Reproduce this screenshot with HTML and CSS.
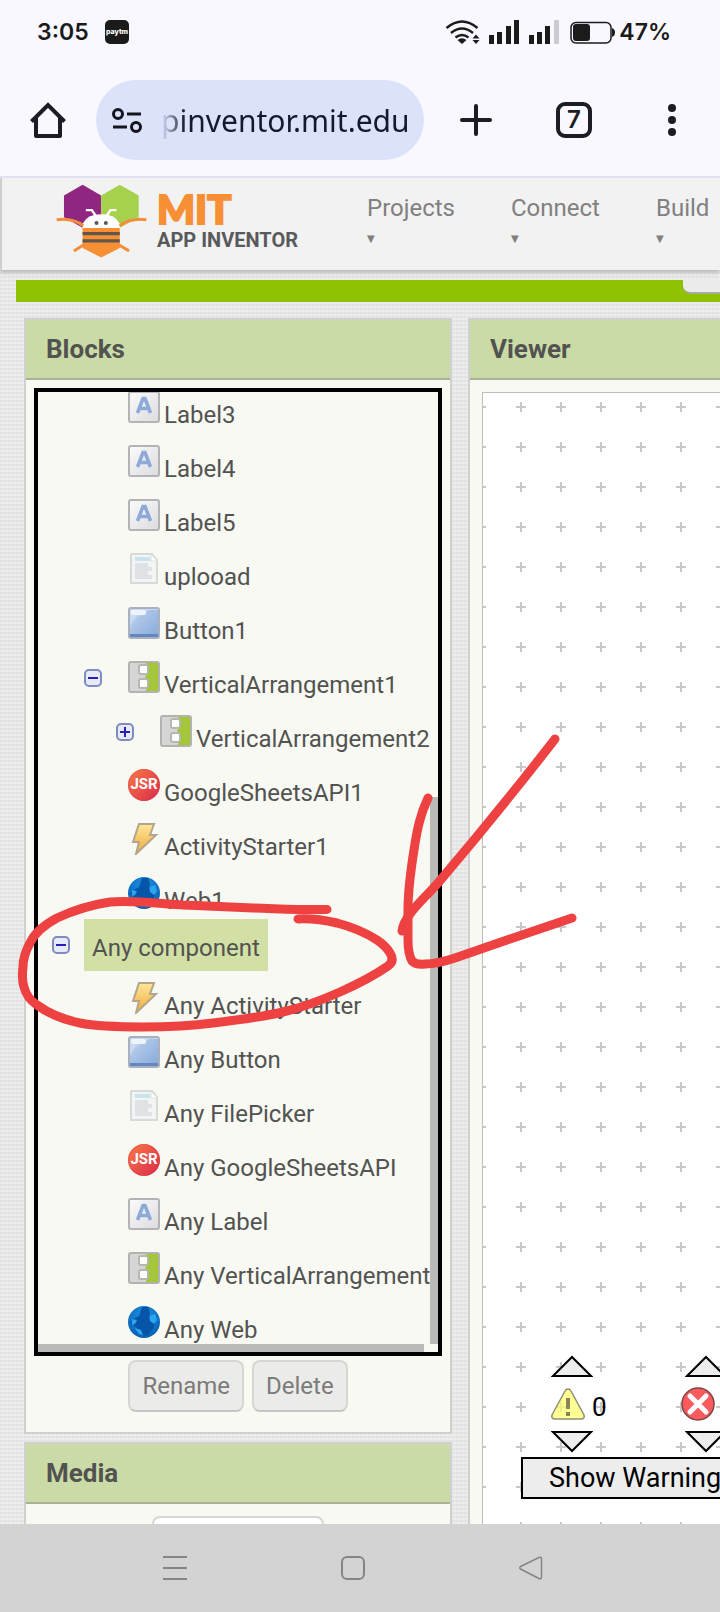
FILE: index.html
```html
<!DOCTYPE html>
<html lang="en">

<head>
    <meta charset="UTF-8">
    <meta name="viewport" content="width=device-width, initial-scale=1">
    <title>MIT App Inventor</title>
    <link rel="stylesheet" href="styles.css">
</head>

<body>
    <!-- shared icons -->
    <svg class="defs" aria-hidden="true">
        <defs>
            <linearGradient id="grey-fade" x1="0" y1="0" x2="1" y2="1">
                <stop offset="0" stop-color="#fbfbfb" />
                <stop offset="1" stop-color="#dcdce0" />
            </linearGradient>
            <linearGradient id="blue-fade" x1="0" y1="0" x2="1" y2="1">
                <stop offset="0" stop-color="#c3d6f0" />
                <stop offset="1" stop-color="#84a8da" />
            </linearGradient>
            <linearGradient id="bolt-fade" x1="0" y1="0" x2="0" y2="1">
                <stop offset="0" stop-color="#ffe79a" />
                <stop offset="1" stop-color="#f0a93a" />
            </linearGradient>
            <radialGradient id="web-fade" cx="0.5" cy="0.3" r="0.7">
                <stop offset="0" stop-color="#1c93e6" />
                <stop offset="1" stop-color="#0960b2" />
            </radialGradient>
            <pattern id="grid" x="33" y="9" width="40" height="40" patternUnits="userSpaceOnUse">
                <path d="M0 5h10M5 0v10" stroke="#c8c8c8" stroke-width="2" />
            </pattern>
        </defs>
        <symbol id="i-label" viewBox="0 0 32 32">
            <rect x="1" y="1" width="30" height="30" rx="2" fill="url(#grey-fade)" stroke="#b4b4b6" stroke-width="2" />
            <path d="M9.500 22 15 7.500h2L22.500 22M12 17.500h8" fill="none" stroke="#8eabd8" stroke-width="3.600" />
        </symbol>
        <symbol id="i-file" viewBox="0 0 32 32">
            <path d="M4 1h20l5 6v23H3V2z" fill="#f2f5f4" stroke="#d6dbd9" stroke-width="2" />
            <path d="M23 2v6h6" fill="#fff" stroke="#dce0df" />
            <path d="M7 6h15" stroke="#c9e4ea" stroke-width="4" />
            <path d="M7 12h13M7 16h17M7 20h13M7 24h17" stroke="#e0e3e5" stroke-width="4" />
        </symbol>
        <symbol id="i-button" viewBox="0 0 32 32">
            <rect x="1" y="1" width="30" height="30" rx="2" fill="url(#blue-fade)" stroke="#a9b1bf" stroke-width="2" />
            <path d="M2 27h28v3H2z" fill="#6388bf" />
            <path d="M2 20Q6 8 22 3h8v-1H2z" fill="#d5e3f6" opacity="0.600" />
            <rect x="3" y="3" width="15" height="5" rx="2" fill="#eef4fc" />
        </symbol>
        <symbol id="i-vertical" viewBox="0 0 32 32">
            <rect x="1" y="1" width="30" height="30" rx="2" fill="#d6d6d6" />
            <path d="M17 1h14v30H17l4-8-4-7 4-8z" fill="#a4c639" />
            <rect x="1" y="1" width="30" height="30" rx="2" fill="none" stroke="#b2b3ae" stroke-width="2" />
            <rect x="11" y="4" width="9" height="9" rx="2" fill="#fff" stroke="#b5b8ac" stroke-width="2" />
            <rect x="11" y="18" width="9" height="9" rx="2" fill="#fff" stroke="#b5b8ac" stroke-width="2" />
        </symbol>
        <symbol id="i-bolt" viewBox="0 0 32 32">
            <path d="M11 1h15l-4 11h6L8 31l3-12H5z" fill="url(#bolt-fade)" stroke="#b3a68c" stroke-width="2" />
        </symbol>
        <symbol id="i-web" viewBox="0 0 32 32">
            <circle cx="16" cy="16" r="16" fill="url(#web-fade)" />
            <path d="M14 1h6l2 6-1 6 6 4-2 6-6 7-6-2-5-7-6-4 3-4 6-3z" fill="#0755a8" />
            <path d="M22 10l5-2 2 6-3 4-4-3zM4 13l5 1-2 4-3 1zM7 22l6 2 2 5-4-1z" fill="#2aa5ee" />
        </symbol>
        <symbol id="i-minus" viewBox="0 0 18 18">
            <rect x="1" y="1" width="16" height="16" rx="4" fill="#e6eaf9" stroke="#7f8cc0" stroke-width="2" />
            <path d="M4 9h10" stroke="#2a1fb5" stroke-width="2" />
        </symbol>
        <symbol id="i-plus" viewBox="0 0 18 18">
            <rect x="1" y="1" width="16" height="16" rx="4" fill="#e6eaf9" stroke="#7f8cc0" stroke-width="2" />
            <path d="M4 9h10M9 4v10" stroke="#2a1fb5" stroke-width="2" />
        </symbol>
        <symbol id="i-up" viewBox="0 0 42 22">
            <path d="M2 21 21 2l19 19z" fill="#ededed" stroke="#000" stroke-width="2" />
        </symbol>
        <symbol id="i-down" viewBox="0 0 42 22">
            <path d="M2 1h38L21 20z" fill="#ededed" stroke="#000" stroke-width="2" />
        </symbol>
    </svg>

    <header class="status-bar">
        <span class="clock">3:05</span>
        <svg class="paytm" viewBox="0 0 24 24">
            <rect width="24" height="24" rx="5" fill="#1b1b1b" />
            <text x="12" y="14">paytm</text>
        </svg>
        <svg class="signals" viewBox="448 18 170 28">
            <g fill="none" stroke="#1b1b1b" stroke-width="2.500">
                <path d="M448.500 28Q464 15 479.500 28M453 33q11-9 22 0M457.500 37.500q6.500-5 13 0" />
                <rect x="573" y="22.500" width="40" height="20.500" rx="5" stroke-width="1.500" />
            </g>
            <g fill="#1b1b1b">
                <path d="M459.500 40q4.500-3.500 9 0L464 44z" />
                <path d="M474.500 38.500 478 34.500l3.500 4zM474.500 40l3.500 4 3.500-4z" />
                <rect x="491" y="35" width="5" height="9" />
                <rect x="499" y="32" width="5" height="12" />
                <rect x="508" y="26" width="5" height="18" />
                <rect x="516" y="20" width="5" height="24" />
                <rect x="531" y="35" width="5" height="9" />
                <rect x="539" y="32" width="5" height="12" />
                <rect x="547" y="26" width="5" height="18" />
                <rect x="575" y="24" width="17" height="17" rx="3" />
                <path d="M614 28q3 1 3 4.500t-3 4.500z" />
            </g>
            <rect x="556" y="20" width="5" height="24" fill="#cbcbd0" />
        </svg>
        <span class="battery">47%</span>
    </header>

    <div class="browser-bar">
        <button class="bar-btn" aria-label="Home">
            <svg viewBox="0 0 36 36" fill="none" stroke="#1b1c24" stroke-width="4" stroke-linejoin="round">
                <path d="M1.500 19.500 18 3l16.500 16.500" stroke-linejoin="miter" />
                <path d="M6 16v18h24V16" />
            </svg>
        </button>
        <div class="url-pill">
            <svg viewBox="0 0 30 26" fill="none" stroke="#14151f" stroke-width="3">
                <circle cx="6" cy="7" r="4.500" />
                <circle cx="24" cy="20" r="4.500" />
                <path d="M15 7h14M1 20h14" />
            </svg>
            <input type="text" class="url" aria-label="Address" value="pinventor.mit.edu">
        </div>
        <div class="bar-actions">
            <button class="bar-btn" aria-label="New tab">
                <svg viewBox="0 0 36 36" stroke="#1b1c24" stroke-width="4" stroke-linecap="round">
                    <path d="M4 18h28M18 4v28" />
                </svg>
            </button>
            <button class="bar-btn tabs">7</button>
            <button class="bar-btn" aria-label="Menu">
                <svg viewBox="0 0 36 36" fill="#1b1c24">
                    <circle cx="18" cy="6" r="4" />
                    <circle cx="18" cy="18" r="4" />
                    <circle cx="18" cy="30" r="4" />
                </svg>
            </button>
        </div>
    </div>

    <main class="page">
        <div class="site-header">
            <a class="logo" href="#">
                <svg viewBox="165 38 280 228">
                    <path d="M192 75 248 43l56 32v66l-56 31-56-31z" fill="#90267f" />
                    <path d="M304 75l56-32 57 32v66l-57 31-56-31z" fill="#a6d14c" />
                    <path d="M248 175v-15q14-28 56-28t56 28v15z" fill="#fff" />
                    <path d="M248 173h112v60l-56 29-56-29z" fill="#f79035" />
                    <path d="M248 190h112M248 212h112" stroke="#635549" stroke-width="10" />
                    <g fill="none" stroke="#f28d3c" stroke-width="9">
                        <path d="M170 148q48-6 80 18M440 148q-48-6-80 18M222 242l32-20M388 242l-34-20" />
                    </g>
                    <path d="M258 119h18l12 18M350 119h-18l-12 18" fill="none" stroke="#fff" stroke-width="7" />
                    <circle cx="290" cy="158" r="6" fill="#58595b" />
                    <circle cx="318" cy="158" r="6" fill="#58595b" />
                </svg>
                <span class="logo-text">
                    <strong>MIT</strong>
                    <span>APP INVENTOR</span>
                </span>
            </a>
            <nav class="menu">
                <a href="#">Projects<small>▼</small></a>
                <a href="#">Connect<small>▼</small></a>
                <a href="#">Build<small>▼</small></a>
            </nav>
        </div>

        <div class="project-bar"><button aria-label="Screens"></button></div>

        <div class="columns">
            <div class="side">
                <section class="panel">
                    <h2>Blocks</h2>
                    <div class="panel-body">
                        <div class="tree-box">
                            <ul class="tree">
                                <li>
                                    <ul>
                                        <li><div class="row"><svg><use href="#i-label" /></svg>Label3</div></li>
                                        <li><div class="row"><svg><use href="#i-label" /></svg>Label4</div></li>
                                        <li><div class="row"><svg><use href="#i-label" /></svg>Label5</div></li>
                                        <li><div class="row"><svg><use href="#i-file" /></svg>uplooad</div></li>
                                        <li><div class="row"><svg><use href="#i-button" /></svg>Button1</div></li>
                                        <li>
                                            <div class="row open">
                                                <button class="toggle" aria-label="Collapse"><svg><use href="#i-minus" /></svg></button>
                                                <svg><use href="#i-vertical" /></svg>VerticalArrangement1
                                            </div>
                                            <ul>
                                                <li>
                                                    <div class="row open">
                                                        <button class="toggle" aria-label="Expand"><svg><use href="#i-plus" /></svg></button>
                                                        <svg><use href="#i-vertical" /></svg>VerticalArrangement2
                                                    </div>
                                                </li>
                                            </ul>
                                        </li>
                                        <li><div class="row"><span class="jsr">JSR</span>GoogleSheetsAPI1</div></li>
                                        <li><div class="row"><svg><use href="#i-bolt" /></svg>ActivityStarter1</div></li>
                                        <li><div class="row"><svg><use href="#i-web" /></svg>Web1</div></li>
                                    </ul>
                                </li>
                                <li>
                                    <div class="group">
                                        <button class="toggle" aria-label="Collapse"><svg><use href="#i-minus" /></svg></button>
                                        <span class="selected">Any component</span>
                                    </div>
                                    <ul>
                                        <li><div class="row"><svg><use href="#i-bolt" /></svg>Any ActivityStarter</div></li>
                                        <li><div class="row"><svg><use href="#i-button" /></svg>Any Button</div></li>
                                        <li><div class="row"><svg><use href="#i-file" /></svg>Any FilePicker</div></li>
                                        <li><div class="row"><span class="jsr">JSR</span>Any GoogleSheetsAPI</div></li>
                                        <li><div class="row"><svg><use href="#i-label" /></svg>Any Label</div></li>
                                        <li><div class="row"><svg><use href="#i-vertical" /></svg>Any VerticalArrangement</div></li>
                                        <li><div class="row"><svg><use href="#i-web" /></svg>Any Web</div></li>
                                    </ul>
                                </li>
                            </ul>
                            <div class="scroll-y"></div>
                            <div class="scroll-x"></div>
                        </div>
                        <div class="actions">
                            <button class="btn" disabled>Rename</button>
                            <button class="btn" disabled>Delete</button>
                        </div>
                    </div>
                </section>

                <section class="panel">
                    <h2>Media</h2>
                    <div class="panel-body media">
                        <button class="upload" aria-label="Upload File"></button>
                    </div>
                </section>
            </div>

            <section class="panel viewer">
                <h2>Viewer</h2>
                <div class="workspace">
                    <svg class="grid">
                        <rect width="100%" height="100%" fill="url(#grid)" />
                    </svg>
                    <div class="warnings">
                        <div class="indicators">
                            <div class="indicator">
                                <button aria-label="Previous warning"><svg class="arrow"><use href="#i-up" /></svg></button>
                                <div class="count">
                                    <svg viewBox="0 0 34 34">
                                        <path d="M17 2q2 0 3 2l13 24q1 4-3 4H4q-4 0-3-4L14 4q1-2 3-2z" fill="#ffff66" fill-opacity="0.700" stroke="#8f8f78" stroke-width="1.500" />
                                        <path d="M17 11v11M17 25v4" stroke="#8a8457" stroke-width="4" />
                                    </svg>
                                    <span>0</span>
                                </div>
                                <button aria-label="Next warning"><svg class="arrow"><use href="#i-down" /></svg></button>
                            </div>
                            <div class="indicator errors">
                                <button aria-label="Previous error"><svg class="arrow"><use href="#i-up" /></svg></button>
                                <div class="count">
                                    <svg viewBox="0 0 34 34">
                                        <circle cx="17" cy="17" r="16" fill="#fb5a5e" stroke="#7d4444" stroke-width="1.500" />
                                        <path d="m9 9 16 16M25 9 9 25" stroke="#fff" stroke-width="5" stroke-linecap="round" />
                                    </svg>
                                </div>
                                <button aria-label="Next error"><svg class="arrow"><use href="#i-down" /></svg></button>
                            </div>
                        </div>
                        <button class="show-warnings">Show Warning</button>
                    </div>
                </div>
            </section>
        </div>
    </main>

    <!-- hand-drawn marker -->
    <svg class="marker" viewBox="0 0 720 1612" aria-hidden="true">
        <path d="M327 909.500C300 910 275 908.500 253 908C225 907 205 906 183 905C155 903 130 900 110 902C90 905 72 911 57 918C44 925 35 932 30 943C25 952 23 958 23 967C22 975 22 981 24 987C26 995 31 1001 37 1005C48 1013 65 1020 80 1023C100 1027 122 1027 143 1027C168 1027 190 1026 213 1023C238 1020 262 1017 283 1012C304 1007 322 1000 340 992C358 984 375 975 388 966Q395 961 390 953Q386 946 377 940Q360 929 337 923Q315 918 298 919" />
        <path d="M555 739Q500 810 438 883C425 898 404 915 402 931" />
        <path d="M428 798C420 815 417 830 414 850C410 875 408 890 408 910V940Q408 954 412 961Q416 965 425 964Q437 964 455 958L507 940L572 918" />
    </svg>

    <footer class="system-nav">
        <button aria-label="Recent apps">
            <svg viewBox="0 0 24 24"><path d="M0 1h24M0 12h24M0 23h24" /></svg>
        </button>
        <button aria-label="Home screen">
            <svg viewBox="0 0 24 24"><rect x="1" y="1" width="22" height="22" rx="5" /></svg>
        </button>
        <button aria-label="Back">
            <svg viewBox="0 0 24 24"><path d="M1.500 10.500 20 1.500q2.500-1 2.500 1.500v18q0 2.500-2.500 1.500L1.500 13q-1.500-1.200 0-2.500z" stroke-width="1.500" /></svg>
        </button>
    </footer>
</body>

</html>
```
FILE: styles.css
```css
* {
    box-sizing: border-box;
}

body {
    margin: 0;
    height: 100vh;
    display: flex;
    flex-direction: column;
    position: relative;
    overflow: hidden;
    font-family: Roboto, sans-serif;
    font-size: 24px;
    color: #525350;
    background: #f9f8fe;
}

button {
    margin: 0;
    padding: 0;
    border: 0;
    background: none;
    font: inherit;
    color: inherit;
    cursor: pointer;
}

svg {
    display: block;
    flex: none;
}

ul {
    margin: 0;
    padding: 0;
    list-style: none;
}

.defs {
    position: absolute;
    width: 0;
    height: 0;
}

/* phone status bar */
.status-bar {
    flex: none;
    height: 64px;
    padding: 0 49px 0 37px;
    display: flex;
    align-items: center;
    font-family: Inter, sans-serif;
    font-size: 23px;
    font-weight: 600;
    color: #1b1b1b;
}

.paytm {
    width: 24px;
    height: 24px;
    margin-left: 16px;
}

.paytm text {
    font-size: 7px;
    font-weight: 800;
    text-anchor: middle;
    fill: #fff;
}

.signals {
    width: 170px;
    height: 28px;
    margin-left: auto;
}

.battery {
    margin-left: 3px;
}

/* browser toolbar */
.browser-bar {
    flex: none;
    height: 114px;
    padding: 0 30px;
    display: flex;
    align-items: center;
    border-bottom: 2px solid #dfe1ee;
}

.bar-btn,
.bar-btn svg {
    width: 36px;
    height: 36px;
}

.url-pill {
    width: 328px;
    height: 80px;
    margin-left: 30px;
    padding: 0 12px 0 16px;
    display: flex;
    align-items: center;
    gap: 19px;
    border-radius: 40px;
    background: #dbe3fb;
}

.url-pill svg {
    width: 30px;
    height: 26px;
}

.url {
    flex: 1;
    min-width: 0;
    padding: 0;
    border: 0;
    outline: 0;
    font-family: "Noto Sans", sans-serif;
    font-size: 30px;
    color: transparent;
    background: linear-gradient(90deg, #dbe3fb, #14192e 24px);
    -webkit-background-clip: text;
    background-clip: text;
}

.bar-actions {
    margin-left: auto;
    display: flex;
    gap: 62px;
}

.tabs {
    border: 4px solid #1b1c24;
    border-radius: 9px;
    font-family: Inter, sans-serif;
    font-weight: 600;
    line-height: 28px;
    color: #1b1c24;
}

/* app inventor page */
.page {
    flex: 1;
    min-height: 0;
    display: flex;
    flex-direction: column;
    overflow: hidden;
    background-color: #e6e6e6;
    background-image:
        repeating-linear-gradient(0deg, rgba(255, 255, 255, 0.3) 0 2px, transparent 2px 4px),
        repeating-linear-gradient(90deg, rgba(0, 0, 0, 0.02) 0 2px, transparent 2px 4px);
}

.site-header {
    flex: none;
    height: 92px;
    padding-left: 53px;
    display: flex;
    border-left: 2px solid #cfcfcf;
    background: #f2f2f2;
    box-shadow: 0 2px 4px rgba(0, 0, 0, 0.25);
}

.logo {
    width: 257px;
    flex: none;
    padding-top: 5px;
    display: flex;
    gap: 9px;
    color: #58595b;
    text-decoration: none;
}

.logo svg {
    width: 93px;
    height: 76px;
}

.logo-text {
    padding-top: 5px;
    display: flex;
    flex-direction: column;
}

.logo-text strong {
    font-family: Lato, sans-serif;
    font-size: 40px;
    font-weight: 900;
    line-height: 42px;
    color: #f79035;
    -webkit-text-stroke: 2px #f79035;
}

.logo-text span {
    font-size: 20px;
    font-weight: 700;
    line-height: 20px;
    white-space: nowrap;
}

.menu {
    flex: none;
    margin-left: 55px;
    padding-top: 16px;
    display: flex;
    gap: 56px;
}

.menu a {
    line-height: 28px;
    color: #808080;
    text-decoration: none;
}

.menu small {
    display: block;
    font-family: "DejaVu Sans", sans-serif;
    font-size: 10px;
    line-height: 34px;
}

.project-bar {
    flex: none;
    height: 22px;
    margin: 10px 0 16px 16px;
    display: flex;
    justify-content: flex-end;
    background: #8fc202;
}

.project-bar button {
    width: 37px;
    height: 14px;
    border-bottom: 2px solid #a9ad9f;
    border-bottom-left-radius: 8px;
    background: #ececec;
}

.columns {
    flex: 1;
    min-height: 0;
    padding-left: 24px;
    display: flex;
    gap: 16px;
}

.side {
    width: 428px;
    flex: none;
    display: flex;
    flex-direction: column;
    gap: 8px;
}

.panel {
    border: 2px solid #d0d1ce;
    background: #f8f9f3;
}

.panel h2 {
    margin: 0;
    padding: 0 20px;
    border-bottom: 2px solid #aab196;
    font-size: 26px;
    font-weight: 700;
    line-height: 58px;
    background: #cbdba7;
}

.panel-body {
    padding: 8px 8px 20px;
}

/* blocks tree */
.tree-box {
    position: relative;
    padding-bottom: 4px;
    border: 4px solid #000;
    overflow: hidden;
}

/* list is scrolled down a little */
.tree {
    margin-top: -13px;
}

.tree ul {
    padding-left: 32px;
}

.row {
    height: 54px;
    padding: 12px 0 0 58px;
    display: flex;
    align-items: baseline;
    gap: 4px;
    line-height: 48px;
    white-space: nowrap;
}

.row > svg,
.jsr {
    width: 32px;
    height: 32px;
}

.row.open {
    padding-left: 14px;
}

.row > svg,
.row .toggle,
.jsr {
    align-self: flex-start;
}

.toggle {
    flex: none;
    width: 18px;
    height: 18px;
}

.toggle svg {
    width: 18px;
    height: 18px;
}

.row .toggle {
    margin: 8px 22px 0 0;
}

.group {
    height: 51px;
    padding-left: 14px;
    display: flex;
    align-items: center;
    gap: 14px;
}

.selected {
    padding: 7px 8px 0;
    line-height: 45px;
    background: #d2e0a6;
}

.jsr {
    flex: none;
    border-radius: 50%;
    background: linear-gradient(135deg, #fb7a45, #d92a4c);
    box-shadow: inset 0 0 2px #c9433f;
    font-size: 15px;
    font-weight: 700;
    line-height: 30px;
    text-align: center;
    color: #fff;
}

.scroll-y,
.scroll-x {
    position: absolute;
    background: #babbb6;
}

.scroll-y {
    top: 405px;
    right: 0;
    bottom: 8px;
    width: 8px;
}

.scroll-x {
    left: 0;
    right: 14px;
    bottom: 0;
    height: 8px;
}

.actions {
    margin-top: 4px;
    display: flex;
    justify-content: center;
    gap: 8px;
}

.btn {
    height: 52px;
    padding: 0 12px;
    border: 2px solid #d6d6d3;
    border-bottom-color: #c6c6c4;
    border-radius: 8px;
    color: #7b7b79;
    background: #ebebe9;
}

.media {
    padding-top: 12px;
}

.upload {
    display: block;
    width: 172px;
    height: 52px;
    margin: 0 auto;
    border: 2px solid #d6d6d3;
    border-radius: 8px;
    background: #fff;
}

/* viewer */
.viewer {
    flex: none;
    width: 480px;
    display: flex;
    flex-direction: column;
    border-bottom: 0;
}

.workspace {
    flex: 1;
    position: relative;
    margin: 12px 0 0 12px;
    border: 1px solid #bdbdba;
    border-width: 1px 0 0 1px;
    background: #fff;
}

.grid {
    position: absolute;
    width: 100%;
    height: 100%;
}

.warnings {
    position: absolute;
    left: 38px;
    bottom: 25px;
    color: #000;
}

.indicators {
    display: flex;
    padding: 0 0 4px 30px;
}

.indicator {
    width: 134px;
    display: flex;
    flex-direction: column;
    align-items: flex-start;
    gap: 10px;
}

.arrow {
    width: 42px;
    height: 22px;
}

.count {
    height: 34px;
    display: flex;
    align-items: flex-end;
    gap: 7px;
    font-size: 26px;
    line-height: 28px;
}

.count svg {
    width: 34px;
    height: 34px;
}

.errors .count {
    margin-left: -4px;
}

.show-warnings {
    width: 240px;
    height: 42px;
    padding: 0 26px;
    border: 2px solid #000;
    font-size: 27px;
    text-align: left;
    white-space: nowrap;
    background: #ededed;
}

.marker {
    position: absolute;
    top: 0;
    left: 0;
    width: 100%;
    fill: none;
    stroke: #ee4141;
    stroke-width: 9;
    stroke-linecap: round;
    stroke-linejoin: round;
    pointer-events: none;
}

/* phone navigation bar */
.system-nav {
    flex: none;
    height: 88px;
    padding-right: 15px;
    display: flex;
    align-items: center;
    justify-content: center;
    gap: 154px;
    background: #d3d3d3;
}

.system-nav svg {
    width: 24px;
    height: 24px;
    fill: none;
    stroke: #858585;
    stroke-width: 2;
}
```
